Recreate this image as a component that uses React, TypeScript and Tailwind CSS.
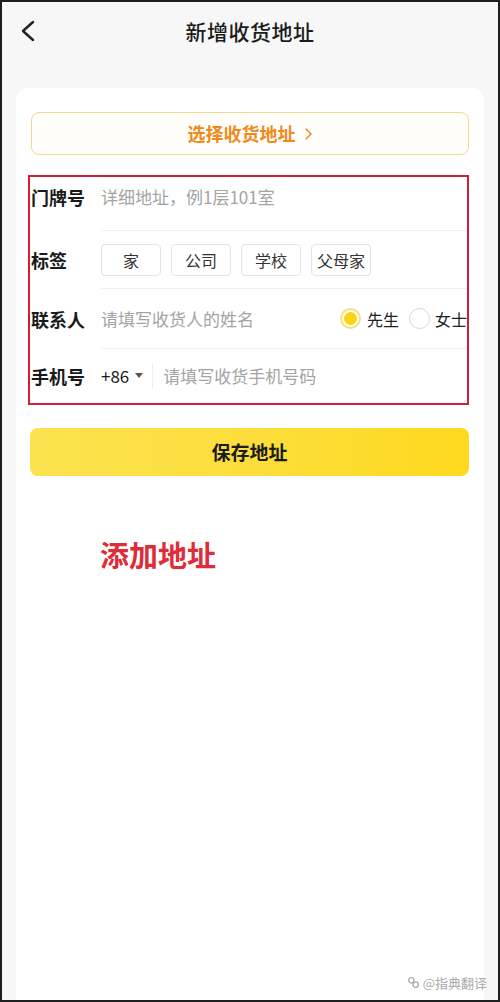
const cjk = { fontFamily: '"Noto Sans CJK SC", "Noto Sans", sans-serif' };

const tags = ["家", "公司", "学校", "父母家"];

function Row({ label, h, pad = "", last, children }: { label: string; h: string; pad?: string; last?: boolean; children: React.ReactNode }) {
  return (
    <div className={`flex items-stretch ${h}`}>
      <div className={`w-[71px] shrink-0 flex items-center pl-[1px] text-[18px] font-bold text-[#1a1a1a] ${pad}`}>{label}</div>
      <div className={`flex-1 flex items-center ${pad} ${last ? "" : "border-b border-[#f1f1f1]"}`}>{children}</div>
    </div>
  );
}

export default function App() {
  return (
    <div style={cjk} className="w-[500px] h-[1002px] border-2 border-[#1e1e1e] bg-[#f7f7f7] flex flex-col overflow-hidden">
      {/* ── HEADER ─────────────────────────────── */}
      <div className="h-[86px] shrink-0 relative">
        <div className="h-[60px] flex items-center justify-center">
          <h1 className="text-[21px] font-medium text-[#1c1c1c] tracking-[0.5px]">新增收货地址</h1>
        </div>
        <svg className="absolute left-[17px] top-[17px]" width="18" height="24" viewBox="0 0 18 24" fill="none">
          <path d="M14 3 L4 12 L14 21" stroke="#222" strokeWidth="2.4" strokeLinecap="round" strokeLinejoin="round" />
        </svg>
      </div>

      {/* ── CARD ───────────────────────────────── */}
      <div className="flex-1 mx-[14px] bg-white rounded-t-[12px] px-[15px] pt-[24px] flex flex-col">
        <button className="h-[43px] w-full rounded-[8px] border border-[#f4d793] bg-[#fffefa] flex items-center justify-center gap-[8px] text-[18px] font-bold text-[#f0891a]">
          选择收货地址
          <svg width="9" height="14" viewBox="0 0 9 14" fill="none">
            <path d="M2 2 L7 7 L2 12" stroke="#f0891a" strokeWidth="1.5" strokeLinecap="round" strokeLinejoin="round" />
          </svg>
        </button>

        <div className="mt-[20px] -ml-[3px] w-[441px] border-2 border-[#d21f36]">
          <Row label="门牌号" h="h-[54px]" pad="pb-[13px]">
            <span className="text-[17px] text-[#a3a3a3]">详细地址，例1层101室</span>
          </Row>
          <Row label="标签" h="h-[58px]">
            <div className="flex gap-[10px]">
              {tags.map((t) => (
                <span key={t} className="w-[60px] h-[32px] flex items-center justify-center rounded-[4px] border border-[#e4e4e4] text-[16px] text-[#333]">
                  {t}
                </span>
              ))}
            </div>
          </Row>
          <Row label="联系人" h="h-[60px]">
            <span className="text-[17px] text-[#a3a3a3]">请填写收货人的姓名</span>
            <div className="ml-auto flex items-center">
              <span className="w-[21px] h-[21px] rounded-full border-2 border-[#f6e27c] flex items-center justify-center">
                <span className="w-[13px] h-[13px] rounded-full bg-[#f9d514]" />
              </span>
              <span className="ml-[6px] text-[16px] text-[#222]">先生</span>
              <span className="ml-[10px] w-[21px] h-[21px] rounded-full border border-[#d8d8d8]" />
              <span className="ml-[5px] text-[16px] text-[#222] whitespace-nowrap">女士</span>
            </div>
          </Row>
          <Row label="手机号" h="h-[54px]" last>
            <span className="text-[17px] text-[#1a1a1a]">+86</span>
            <svg className="ml-[6px]" width="8" height="6" viewBox="0 0 8 6">
              <path d="M0 0 L8 0 L4 5 Z" fill="#555" />
            </svg>
            <span className="ml-[9px] w-px h-[26px] bg-[#f0f0f0]" />
            <span className="ml-[10px] text-[17px] text-[#a3a3a3]">请填写收货手机号码</span>
          </Row>
        </div>

        <button className="mt-[23px] h-[48px] w-[439px] -ml-[1px] rounded-[8px] bg-gradient-to-r from-[#fbe24e] to-[#fed91c] text-[19px] font-bold text-[#1c1c1c]">
          保存地址
        </button>

        <div className="mt-[58px] pl-[69px] text-[29px] font-bold text-[#e02b38] leading-[40px]">添加地址</div>

        <div className="mt-auto pb-[8px] -mr-[18px] flex items-center justify-end gap-[3px] text-[13px] text-[#aaaaaa]">
          <svg width="13" height="13" viewBox="0 0 12 12" fill="none">
            <circle cx="4" cy="4" r="2.5" stroke="#aaa" strokeWidth="1.2" />
            <circle cx="8" cy="8" r="2.5" stroke="#aaa" strokeWidth="1.2" />
          </svg>
          <span>@指典翻译</span>
        </div>
      </div>
    </div>
  );
}
